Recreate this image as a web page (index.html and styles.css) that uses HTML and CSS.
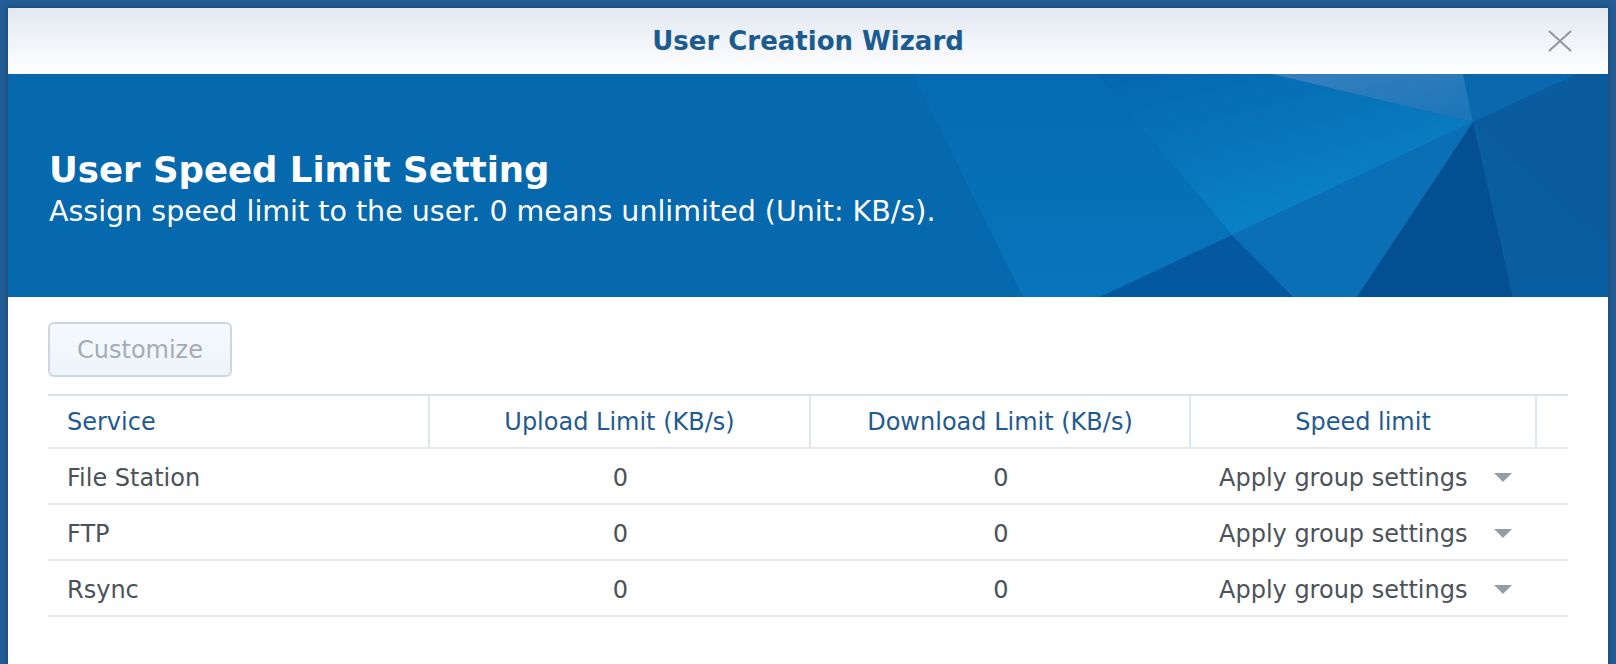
FILE: index.html
```html
<!DOCTYPE html>
<html lang="en">

<head>
    <meta charset="UTF-8">
    <meta name="viewport" content="width=device-width, initial-scale=1.0">
    <title>User Creation Wizard</title>
    <link rel="stylesheet" href="styles.css">
</head>

<body>
    <div class="window">
        <!-- Title bar -->
        <header class="titlebar">
            <h1 class="window-title">User Creation Wizard</h1>
            <button class="close-btn" aria-label="Close">
                <svg width="24" height="22" viewBox="0 0 24 22">
                    <path d="M1 1 L23 21 M23 1 L1 21" stroke="#8e9398" stroke-width="1.8" fill="none" />
                </svg>
            </button>
        </header>

        <!-- Step banner -->
        <section class="banner">
            <svg class="banner-art" viewBox="0 0 1600 223" preserveAspectRatio="none">
                <defs>
                    <linearGradient id="sideFacet" x1="0" y1="0" x2="0" y2="1">
                        <stop offset="0" stop-color="#066bb1" />
                        <stop offset="1" stop-color="#0775bc" />
                    </linearGradient>
                    <linearGradient id="midGlow" x1="0" y1="0" x2="0.6" y2="1">
                        <stop offset="0" stop-color="#0567ad" />
                        <stop offset="1" stop-color="#0a84ca" />
                    </linearGradient>
                    <linearGradient id="lightPatch" x1="0" y1="0" x2="1" y2="1">
                        <stop offset="0" stop-color="#3680be" />
                        <stop offset="1" stop-color="#1a75b9" />
                    </linearGradient>
                </defs>
                <rect width="1600" height="223" fill="#0668ad" />
                <polygon points="905,0 1089,0 1224,161 1092,223 1015,223" fill="url(#sideFacet)" />
                <polygon points="1089,0 1264,0 1465,48 1224,161" fill="url(#midGlow)" />
                <polygon points="1264,0 1455,0 1465,48" fill="url(#lightPatch)" />
                <polygon points="1455,0 1569,0 1465,48" fill="#0968ae" />
                <polygon points="1569,0 1600,0 1600,176 1465,48" fill="#0a5c9f" />
                <polygon points="1092,223 1224,161 1285,223" fill="#0458a0" />
                <polygon points="1224,161 1465,48 1349,223 1285,223" fill="#0a6fb5" />
                <polygon points="1465,48 1505,223 1349,223" fill="#044f91" />
                <polygon points="1465,48 1600,176 1600,223 1505,223" fill="#095da1" />
            </svg>
            <h2 class="banner-title">User Speed Limit Setting</h2>
            <p class="banner-desc">Assign speed limit to the user. 0 means unlimited (Unit: KB/s).</p>
        </section>

        <!-- Content -->
        <main class="content">
            <button class="btn" disabled>Customize</button>

            <div class="grid">
                <div class="grid-head">
                    <div class="cell head-cell">Service</div>
                    <div class="cell head-cell center">Upload Limit (KB/s)</div>
                    <div class="cell head-cell center">Download Limit (KB/s)</div>
                    <div class="cell head-cell center">Speed limit</div>
                    <div class="cell head-cell spacer"></div>
                </div>

                <div class="grid-row">
                    <div class="cell">File Station</div>
                    <div class="cell center">0</div>
                    <div class="cell center">0</div>
                    <div class="cell combo"><span>Apply group settings</span><span class="arrow"></span></div>
                    <div class="cell"></div>
                </div>

                <div class="grid-row">
                    <div class="cell">FTP</div>
                    <div class="cell center">0</div>
                    <div class="cell center">0</div>
                    <div class="cell combo"><span>Apply group settings</span><span class="arrow"></span></div>
                    <div class="cell"></div>
                </div>

                <div class="grid-row">
                    <div class="cell">Rsync</div>
                    <div class="cell center">0</div>
                    <div class="cell center">0</div>
                    <div class="cell combo"><span>Apply group settings</span><span class="arrow"></span></div>
                    <div class="cell"></div>
                </div>
            </div>
        </main>
    </div>
</body>

</html>
```

FILE: styles.css
```css
/* General Styles */
* {
    margin: 0;
    padding: 0;
    box-sizing: border-box;
}

html,
body {
    height: 100%;
}

body {
    font-family: "DejaVu Sans", Verdana, sans-serif;
    background-color: #235d95;
    padding: 8px 8px 0;
    overflow: hidden;
}

/* Window */
.window {
    width: 1600px;
    height: 100%;
    background-color: #fff;
    box-shadow: 0 0 6px rgba(0, 0, 0, 0.35);
}

/* Title Bar */
.titlebar {
    height: 66px;
    display: grid;
    grid-template-columns: 1fr auto 1fr;
    align-items: center;
    background: linear-gradient(#e2e8f1, #ffffff);
}

.window-title {
    grid-column: 2;
    font-size: 26px;
    font-weight: bold;
    line-height: 66px;
    color: #1c5b90;
}

.close-btn {
    grid-column: 3;
    justify-self: end;
    margin-right: 36px;
    border: none;
    background: none;
    display: flex;
}

/* Banner */
.banner {
    position: relative;
    height: 223px;
    padding: 76px 41px 0;
    overflow: hidden;
    color: #fff;
}

.banner-art {
    position: absolute;
    top: 0;
    left: 0;
    width: 100%;
    height: 100%;
}

.banner-title,
.banner-desc {
    position: relative;
}

.banner-title {
    font-size: 35.5px;
    font-weight: bold;
    line-height: 40px;
}

.banner-desc {
    margin-top: 6px;
    font-size: 28.5px;
    line-height: 32px;
}

/* Content */
.content {
    padding: 25px 40px;
}

.btn {
    width: 184px;
    height: 55px;
    font-family: inherit;
    font-size: 24px;
    color: #a3acb5;
    background: linear-gradient(#f5f9fd, #eef4fa);
    border: 2px solid #cbd7e2;
    border-radius: 6px;
}

/* Table */
.grid {
    margin-top: 17px;
    width: 1520px;
    border-top: 2px solid #d8e2ec;
    font-size: 24px;
}

.grid-head,
.grid-row {
    display: grid;
    grid-template-columns: 382px 381px 380px 346px 31px;
}

.grid-head {
    height: 53px;
    border-bottom: 2px solid #e3e9ef;
    color: #1f5b90;
}

.grid-row {
    height: 56px;
    padding-top: 3px;
    border-bottom: 2px solid #e6ebf0;
    color: #4b5259;
}

.cell {
    display: flex;
    align-items: center;
    padding-left: 19px;
    white-space: nowrap;
}

.head-cell {
    border-right: 2px solid #dde7f1;
}

.head-cell.spacer {
    border-right: none;
}

.center {
    justify-content: center;
    padding-left: 0;
}

.combo {
    justify-content: space-between;
    padding: 0 25px 0 28px;
}

.arrow {
    width: 0;
    height: 0;
    border-left: 9.5px solid transparent;
    border-right: 9.5px solid transparent;
    border-top: 9px solid #959da6;
}
```
